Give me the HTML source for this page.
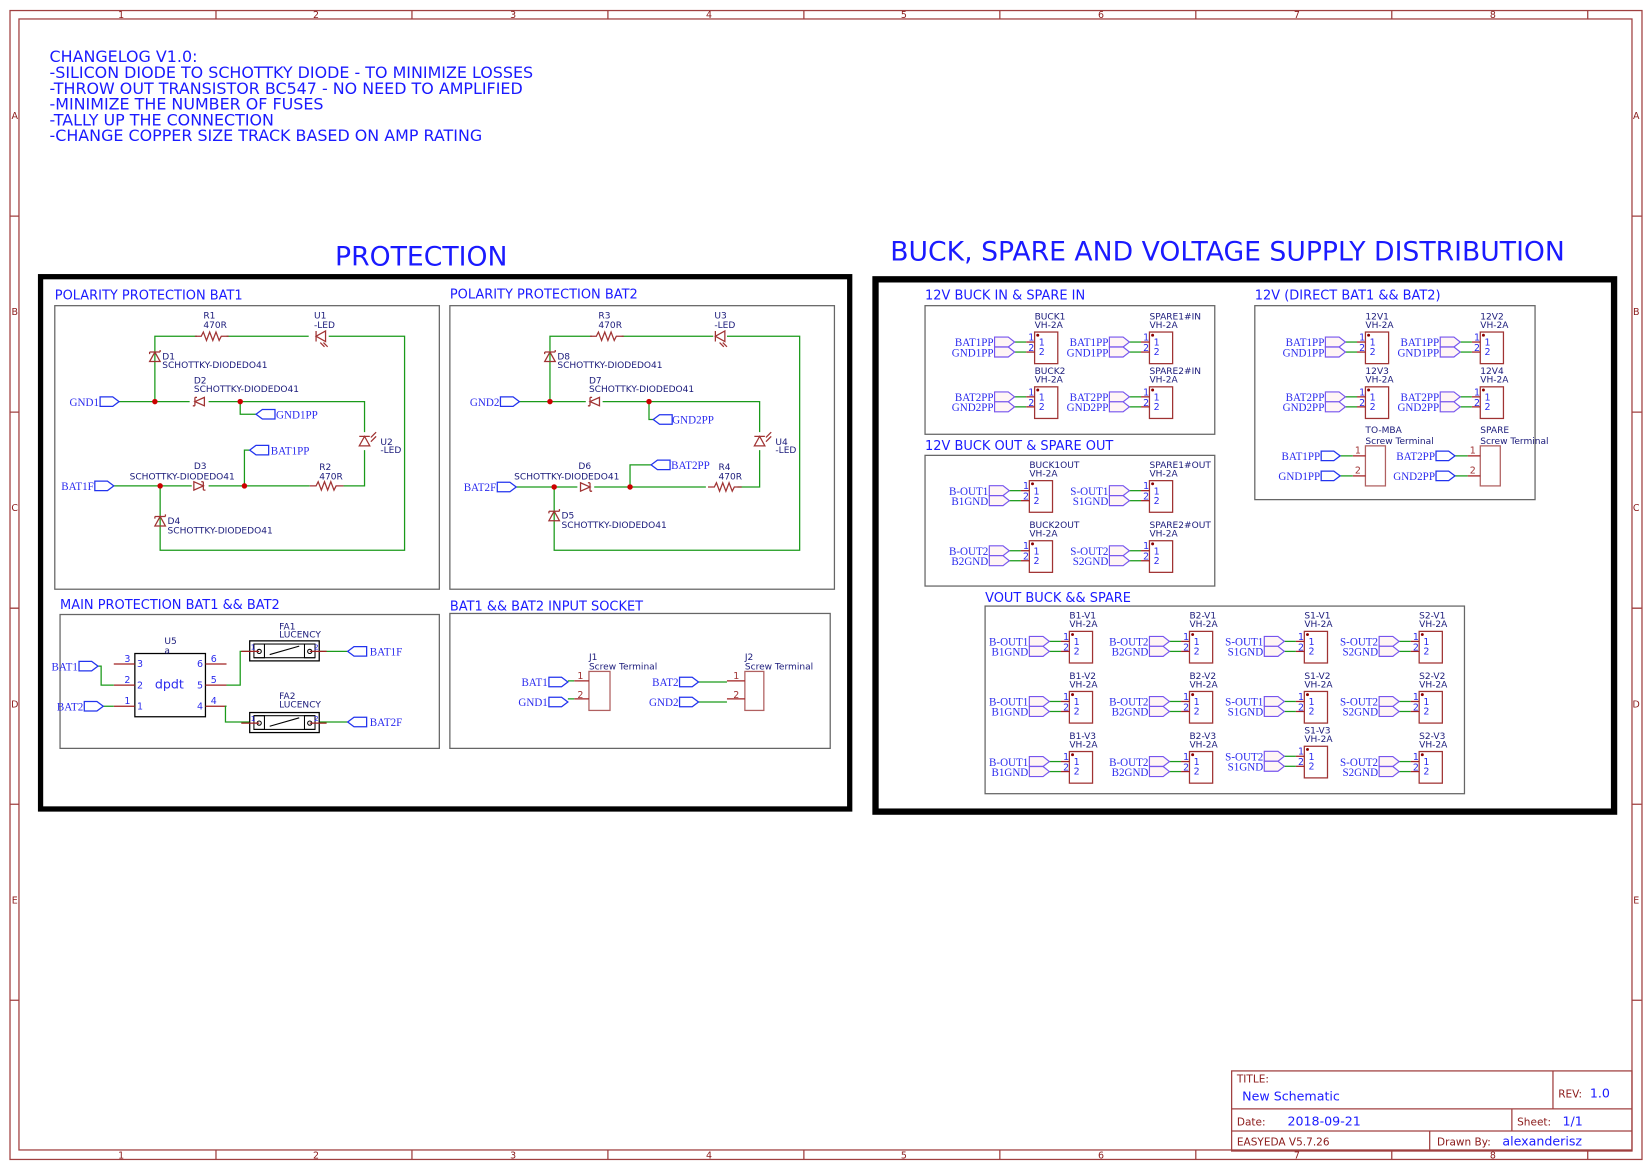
<!DOCTYPE html>
<html><head><meta charset="utf-8">
<style>
html,body{margin:0;padding:0;background:#fff;}
svg{display:block;}
text{font-family:"DejaVu Sans","Liberation Sans",sans-serif;}
.hd{fill:#1a1aff;font-size:12.3px;}
.cl{fill:#1a1aff;font-size:15.1px;}
.big{fill:#1a1aff;font-size:25.3px;}
.cp{fill:#1a1a7a;font-size:8.6px;}
.nl,.nl text{fill:#2a2aee;font-size:10.5px;font-family:"Liberation Serif",serif;}
.pn{fill:#2a2aee;font-size:9px;}
.pr{fill:#a03333;font-size:9px;}
.br{fill:#8b1a1a;font-size:9px;}
.tb{fill:#8b1a1a;font-size:10px;}
.tv{fill:#1a1aff;font-size:12px;}
.w{stroke:#1a9a1a;stroke-width:1.2;fill:none;}
.p{stroke:#a02020;stroke-width:1.2;fill:none;}
.sym{stroke:#a03333;stroke-width:1.2;fill:none;}
.box{stroke:#666;stroke-width:1.2;fill:none;}
.fl{stroke:#7755ee;stroke-width:1.1;fill:#fff5f5;}
.fb{stroke:#2233ee;stroke-width:1.2;fill:#fff;}
.dot{fill:#cc0000;}
</style></head><body>
<svg width="1652" height="1170" viewBox="0 0 1568 1110" preserveAspectRatio="none" xmlns="http://www.w3.org/2000/svg">
<defs>
<g id="cn">
<rect class="sym" x="0" y="0" width="22" height="30" stroke="#b06060"/>
<circle cx="3" cy="3" r="1.4" fill="#8b0000"/>
<line class="p" x1="-8" y1="9.5" x2="0" y2="9.5"/><line class="p" x1="-8" y1="19" x2="0" y2="19"/>
<line class="w" x1="-19" y1="9.5" x2="-8" y2="9.5"/><line class="w" x1="-19" y1="19" x2="-8" y2="19"/>
<polygon class="fl" points="-38,4.8 -25,4.8 -19,9.5 -25,14.2 -38,14.2"/>
<polygon class="fl" points="-38,14.2 -25,14.2 -19,19 -25,23.7 -38,23.7"/>
</g>
<g id="st">
<rect x="0" y="0" width="19" height="38" fill="none" stroke="#b06060" stroke-width="1.2"/>
<line class="p" x1="-12" y1="9.5" x2="0" y2="9.5"/><line class="p" x1="-12" y1="28.5" x2="0" y2="28.5"/>
<line class="w" x1="-24" y1="9.5" x2="-12" y2="9.5"/><line class="w" x1="-24" y1="28.5" x2="-12" y2="28.5"/>
<polygon class="fb" points="-42,5 -30,5 -24,9.5 -30,14 -42,14"/>
<polygon class="fb" points="-42,24 -30,24 -24,28.5 -30,33 -42,33"/>
</g>
<polygon id="flr" class="fb" points="0,-4.5 12,-4.5 18,0 12,4.5 0,4.5"/>
<polygon id="fll" class="fb" points="0,0 6,-4.5 18,-4.5 18,4.5 6,4.5"/>
<path id="res" class="sym" d="M-16,0 H-10 L-8,-4 L-5,4 L-2,-4 L1,4 L4,-4 L7,4 L9,0 H16"/>
<path id="dr" class="sym" d="M-5,-4 V4 L4,0 Z M4,-4 V4 M4,-4 h-2 M4,4 h2"/>
<path id="dl" class="sym" d="M5,-4 V4 L-4,0 Z M-4,-4 V4 M-4,-4 h2 M-4,4 h-2"/>
<path id="du" class="sym" d="M-5,5 H5 L0,-4 Z M-5,-4 H5 M-5,-4 v2 M5,-4 v-2"/>
<path id="led" class="sym" d="M5,-5 V5 L-4,0 Z M-4,-5 V5 M0,6 l4,4 M3,6 l4,4"/>
<path id="ledv" class="sym" d="M-5,5 H5 L0,-4 Z M-5,-4 H5 M6,-3 l5,-5 M6,1 l5,-5"/>
</defs>

<!-- frame -->
<rect x="9.5" y="10" width="1549" height="1090" fill="none" stroke="#a04040" stroke-width="1.2"/>
<rect x="18" y="18" width="1531" height="1073" fill="none" stroke="#a04040" stroke-width="1.2"/>
<g stroke="#a04040" stroke-width="1.2">
<path d="M205,10V18M391,10V18M577,10V18M763,10V18M949,10V18M1135,10V18M1321,10V18M1507,10V18"/>
<path d="M205,1091V1100M391,1091V1100M577,1091V1100M763,1091V1100M949,1091V1100M1135,1091V1100M1321,1091V1100M1507,1091V1100"/>
<path d="M9.5,205H18M9.5,391H18M9.5,577H18M9.5,763H18M9.5,949H18"/>
<path d="M1549,205H1558M1549,391H1558M1549,577H1558M1549,763H1558M1549,949H1558"/>
</g>
<g class="br" text-anchor="middle">
<text x="115" y="17">1</text><text x="300" y="17">2</text><text x="487" y="17">3</text><text x="673" y="17">4</text><text x="858" y="17">5</text><text x="1045" y="17">6</text><text x="1231" y="17">7</text><text x="1417" y="17">8</text>
<text x="115" y="1099">1</text><text x="300" y="1099">2</text><text x="487" y="1099">3</text><text x="673" y="1099">4</text><text x="858" y="1099">5</text><text x="1045" y="1099">6</text><text x="1231" y="1099">7</text><text x="1417" y="1099">8</text>
<text x="14" y="113">A</text><text x="14" y="299">B</text><text x="14" y="485">C</text><text x="14" y="671">D</text><text x="14" y="857">E</text>
<text x="1553" y="113">A</text><text x="1553" y="299">B</text><text x="1553" y="485">C</text><text x="1553" y="671">D</text><text x="1553" y="857">E</text>
</g>

<!-- changelog -->
<g class="cl">
<text x="47" y="59">CHANGELOG V1.0:</text>
<text x="47" y="74">-SILICON DIODE TO SCHOTTKY DIODE - TO MINIMIZE LOSSES</text>
<text x="47" y="89">-THROW OUT TRANSISTOR BC547 - NO NEED TO AMPLIFIED</text>
<text x="47" y="104">-MINIMIZE THE NUMBER OF FUSES</text>
<text x="47" y="119">-TALLY UP THE CONNECTION</text>
<text x="47" y="134">-CHANGE COPPER SIZE TRACK BASED ON AMP RATING</text>
</g>

<text class="big" x="318" y="252">PROTECTION</text>
<text class="big" x="845" y="247">BUCK, SPARE AND VOLTAGE SUPPLY DISTRIBUTION</text>

<rect x="38.5" y="262.5" width="768" height="505" fill="none" stroke="#000" stroke-width="5"/>
<rect x="831" y="265" width="701" height="505" fill="none" stroke="#000" stroke-width="6"/>

<!-- sub boxes -->
<rect class="box" x="52" y="290" width="365" height="269"/>
<rect class="box" x="427" y="290" width="365" height="269"/>
<rect class="box" x="57" y="583" width="360" height="127"/>
<rect class="box" x="427" y="582" width="361" height="128"/>
<rect class="box" x="878" y="290" width="275" height="122"/>
<rect class="box" x="878" y="432" width="275" height="124"/>
<rect class="box" x="1191" y="290" width="266" height="184"/>
<rect class="box" x="935" y="575" width="455" height="178"/>
<g class="hd">
<text x="52" y="284">POLARITY PROTECTION BAT1</text>
<text x="427" y="283">POLARITY PROTECTION BAT2</text>
<text x="57" y="578">MAIN PROTECTION BAT1 &amp;&amp; BAT2</text>
<text x="427" y="579">BAT1 &amp;&amp; BAT2 INPUT SOCKET</text>
<text x="878" y="284">12V BUCK IN &amp; SPARE IN</text>
<text x="878" y="427">12V BUCK OUT &amp; SPARE OUT</text>
<text x="1191" y="284">12V (DIRECT BAT1 &amp;&amp; BAT2)</text>
<text x="935" y="571">VOUT BUCK &amp;&amp; SPARE</text>
</g>

<!-- POLARITY BAT1 -->
<g>
<path class="w" d="M147,381V319H187 M215,319H293 M312,319H384V522H152V461 M113,381H180 M198,381H346V410 M346,427V461H326 M108,461H182 M198,461H294 M228,381V393H243 M232,461V427H237 M147,381V346 M147,330V319 M152,461V486 M152,503V522"/>
<use href="#res" x="201" y="319"/><use href="#led" x="304" y="319"/>
<use href="#du" x="147" y="338"/><use href="#dl" x="189" y="381"/><use href="#dr" x="189" y="461"/>
<use href="#du" x="152" y="494"/><use href="#ledv" x="346" y="418"/><use href="#res" x="310" y="461"/>
<circle class="dot" cx="147" cy="381" r="2.6"/><circle class="dot" cx="228" cy="381" r="2.6"/>
<circle class="dot" cx="152" cy="461" r="2.6"/><circle class="dot" cx="232" cy="461" r="2.6"/>
<use href="#flr" x="95" y="381"/><use href="#fll" x="243" y="393"/><use href="#fll" x="237" y="427"/><use href="#flr" x="90" y="461"/>
<g class="cp">
<text x="193" y="302">R1</text><text x="193" y="311">470R</text>
<text x="298" y="302">U1</text><text x="298" y="311">-LED</text>
<text x="154" y="341">D1</text><text x="154" y="349">SCHOTTKY-DIODEDO41</text>
<text x="184" y="364">D2</text><text x="184" y="372">SCHOTTKY-DIODEDO41</text>
<text x="361" y="422">U2</text><text x="361" y="430">-LED</text>
<text x="184" y="445">D3</text><text x="123" y="455">SCHOTTKY-DIODEDO41</text>
<text x="303" y="446">R2</text><text x="303" y="455">470R</text>
<text x="159" y="497">D4</text><text x="159" y="506">SCHOTTKY-DIODEDO41</text>
</g>
<g class="nl"><text x="94" y="385" text-anchor="end">GND1</text><text x="262" y="397">GND1PP</text><text x="257" y="431">BAT1PP</text><text x="89" y="465" text-anchor="end">BAT1F</text></g>
</g>

<!-- POLARITY BAT2 -->
<g>
<path class="w" d="M522,381V319H562 M590,319H677 M690,319H759V522H526V462 M493,381H556 M572,381H721V410 M721,427V462H700 M490,462H548 M564,462H670 M616,381V398H620 M598,462V441H618 M522,381V346 M522,330V319 M526,462V481 M526,498V522"/>
<use href="#res" x="576" y="319"/><use href="#led" x="683" y="319"/>
<use href="#du" x="522" y="338"/><use href="#dl" x="564" y="381"/><use href="#dr" x="556" y="462"/>
<use href="#du" x="526" y="489"/><use href="#ledv" x="721" y="418"/><use href="#res" x="688" y="462"/>
<circle class="dot" cx="522" cy="381" r="2.6"/><circle class="dot" cx="616" cy="381" r="2.6"/>
<circle class="dot" cx="526" cy="462" r="2.6"/><circle class="dot" cx="598" cy="462" r="2.6"/>
<use href="#flr" x="475" y="381"/><use href="#fll" x="620" y="398"/><use href="#fll" x="618" y="441"/><use href="#flr" x="472" y="462"/>
<g class="cp">
<text x="568" y="302">R3</text><text x="568" y="311">470R</text>
<text x="678" y="302">U3</text><text x="678" y="311">-LED</text>
<text x="529" y="341">D8</text><text x="529" y="349">SCHOTTKY-DIODEDO41</text>
<text x="559" y="364">D7</text><text x="559" y="372">SCHOTTKY-DIODEDO41</text>
<text x="736" y="422">U4</text><text x="736" y="430">-LED</text>
<text x="549" y="445">D6</text><text x="488" y="455">SCHOTTKY-DIODEDO41</text>
<text x="682" y="446">R4</text><text x="682" y="455">470R</text>
<text x="533" y="492">D5</text><text x="533" y="501">SCHOTTKY-DIODEDO41</text>
</g>
<g class="nl"><text x="474" y="385" text-anchor="end">GND2</text><text x="638" y="402">GND2PP</text><text x="637" y="445">BAT2PP</text><text x="471" y="466" text-anchor="end">BAT2F</text></g>
</g>

<!-- MAIN PROTECTION -->
<g>
<rect x="128" y="620" width="67" height="60" fill="none" stroke="#000" stroke-width="1.2"/>
<path class="p" d="M108,630H128M108,650H128M108,670H128M195,630H215M195,650H215M195,670H215"/>
<path class="w" d="M93,632H96V650H108 M98,670H108 M215,650H228V618H237 M215,670H214V685H237 M303,618H330 M303,685H330"/>
<rect x="237" y="608" width="66" height="19" fill="none" stroke="#000" stroke-width="1.2"/>
<rect x="241" y="611" width="58" height="13" fill="none" stroke="#000" stroke-width="1"/>
<path d="M241,611h10v13h-10M299,611h-10v13h10M256,621l28,-8" stroke="#000" fill="none"/>
<circle cx="246" cy="618" r="2" fill="none" stroke="#000"/><circle cx="294" cy="618" r="2" fill="none" stroke="#000"/>
<rect x="237" y="676" width="66" height="19" fill="none" stroke="#000" stroke-width="1.2"/>
<rect x="241" y="679" width="58" height="13" fill="none" stroke="#000" stroke-width="1"/>
<path d="M241,679h10v13h-10M299,679h-10v13h10M256,689l28,-8" stroke="#000" fill="none"/>
<circle cx="246" cy="686" r="2" fill="none" stroke="#000"/><circle cx="294" cy="686" r="2" fill="none" stroke="#000"/>
<path class="p" d="M229,618H246M294,618H310M229,686H246M294,686H310"/>
<use href="#flr" x="75" y="632"/><use href="#flr" x="80" y="670"/>
<use href="#fll" x="330" y="618"/><use href="#fll" x="330" y="685"/>
<g class="cp"><text x="156" y="611">U5</text><text x="156" y="620">a</text>
<text x="265" y="597">FA1</text><text x="265" y="605">LUCENCY</text>
<text x="265" y="663">FA2</text><text x="265" y="671">LUCENCY</text></g>
<text x="147" y="653" fill="#2a2aee" font-size="12">dpdt</text>
<g class="pn"><text x="118" y="628">3</text><text x="130" y="633">3</text><text x="118" y="648">2</text><text x="130" y="653">2</text><text x="118" y="668">1</text><text x="130" y="673">1</text>
<text x="187" y="633">6</text><text x="200" y="628">6</text><text x="187" y="653">5</text><text x="200" y="648">5</text><text x="187" y="673">4</text><text x="200" y="668">4</text>
<text x="238" y="616" font-size="7">1</text><text x="298" y="616" font-size="7">2</text><text x="238" y="684" font-size="7">1</text><text x="298" y="684" font-size="7">2</text></g>
<g class="nl"><text x="74" y="636" text-anchor="end">BAT1</text><text x="79" y="674" text-anchor="end">BAT2</text><text x="351" y="622">BAT1F</text><text x="351" y="689">BAT2F</text></g>
</g>

<!-- INPUT SOCKET -->
<g>
<g transform="translate(559,637)"><rect width="20" height="37" fill="none" stroke="#b06060" stroke-width="1.2"/><path class="p" d="M-14,9H0M-14,26H0"/><path class="w" d="M-20,9H-14M-20,26H-14"/><use href="#flr" x="-38" y="10"/><use href="#flr" x="-38" y="29"/></g>
<g transform="translate(707,637)"><rect width="18" height="37" fill="none" stroke="#b06060" stroke-width="1.2"/><path class="p" d="M-17,9H0M-17,26H0"/><path class="w" d="M-44,10H-17M-44,29H-17"/><use href="#flr" x="-62" y="10"/><use href="#flr" x="-62" y="29"/></g>
<g class="cp"><text x="559" y="626">J1</text><text x="559" y="635">Screw Terminal</text><text x="707" y="626">J2</text><text x="707" y="635">Screw Terminal</text></g>
<g class="pr"><text x="548" y="644">1</text><text x="548" y="662">2</text><text x="696" y="644">1</text><text x="696" y="662">2</text></g>
<g class="nl"><text x="520" y="651" text-anchor="end">BAT1</text><text x="520" y="670" text-anchor="end">GND1</text><text x="644" y="651" text-anchor="end">BAT2</text><text x="644" y="670" text-anchor="end">GND2</text></g>
</g>

<!-- connectors -->
<g transform="translate(982,315)"><use href="#cn"/><text class="cp" x="0" y="-12">BUCK1</text><text class="cp" x="0" y="-4">VH-2A</text><text class="nl" x="-39" y="13.5" text-anchor="end">BAT1PP</text><text class="nl" x="-39" y="23" text-anchor="end">GND1PP</text><text class="pn" x="-6" y="8">1</text><text class="pn" x="-6" y="18">2</text><text class="pn" x="4" y="13">1</text><text class="pn" x="4" y="22">2</text></g>
<g transform="translate(1091,315)"><use href="#cn"/><text class="cp" x="0" y="-12">SPARE1#IN</text><text class="cp" x="0" y="-4">VH-2A</text><text class="nl" x="-39" y="13.5" text-anchor="end">BAT1PP</text><text class="nl" x="-39" y="23" text-anchor="end">GND1PP</text><text class="pn" x="-6" y="8">1</text><text class="pn" x="-6" y="18">2</text><text class="pn" x="4" y="13">1</text><text class="pn" x="4" y="22">2</text></g>
<g transform="translate(982,367)"><use href="#cn"/><text class="cp" x="0" y="-12">BUCK2</text><text class="cp" x="0" y="-4">VH-2A</text><text class="nl" x="-39" y="13.5" text-anchor="end">BAT2PP</text><text class="nl" x="-39" y="23" text-anchor="end">GND2PP</text><text class="pn" x="-6" y="8">1</text><text class="pn" x="-6" y="18">2</text><text class="pn" x="4" y="13">1</text><text class="pn" x="4" y="22">2</text></g>
<g transform="translate(1091,367)"><use href="#cn"/><text class="cp" x="0" y="-12">SPARE2#IN</text><text class="cp" x="0" y="-4">VH-2A</text><text class="nl" x="-39" y="13.5" text-anchor="end">BAT2PP</text><text class="nl" x="-39" y="23" text-anchor="end">GND2PP</text><text class="pn" x="-6" y="8">1</text><text class="pn" x="-6" y="18">2</text><text class="pn" x="4" y="13">1</text><text class="pn" x="4" y="22">2</text></g>

<g transform="translate(977,456)"><use href="#cn"/><text class="cp" x="0" y="-12">BUCK1OUT</text><text class="cp" x="0" y="-4">VH-2A</text><text class="nl" x="-39" y="13.5" text-anchor="end">B-OUT1</text><text class="nl" x="-39" y="23" text-anchor="end">B1GND</text><text class="pn" x="-6" y="8">1</text><text class="pn" x="-6" y="18">2</text><text class="pn" x="4" y="13">1</text><text class="pn" x="4" y="22">2</text></g>
<g transform="translate(1091,456)"><use href="#cn"/><text class="cp" x="0" y="-12">SPARE1#OUT</text><text class="cp" x="0" y="-4">VH-2A</text><text class="nl" x="-39" y="13.5" text-anchor="end">S-OUT1</text><text class="nl" x="-39" y="23" text-anchor="end">S1GND</text><text class="pn" x="-6" y="8">1</text><text class="pn" x="-6" y="18">2</text><text class="pn" x="4" y="13">1</text><text class="pn" x="4" y="22">2</text></g>
<g transform="translate(977,513)"><use href="#cn"/><text class="cp" x="0" y="-12">BUCK2OUT</text><text class="cp" x="0" y="-4">VH-2A</text><text class="nl" x="-39" y="13.5" text-anchor="end">B-OUT2</text><text class="nl" x="-39" y="23" text-anchor="end">B2GND</text><text class="pn" x="-6" y="8">1</text><text class="pn" x="-6" y="18">2</text><text class="pn" x="4" y="13">1</text><text class="pn" x="4" y="22">2</text></g>
<g transform="translate(1091,513)"><use href="#cn"/><text class="cp" x="0" y="-12">SPARE2#OUT</text><text class="cp" x="0" y="-4">VH-2A</text><text class="nl" x="-39" y="13.5" text-anchor="end">S-OUT2</text><text class="nl" x="-39" y="23" text-anchor="end">S2GND</text><text class="pn" x="-6" y="8">1</text><text class="pn" x="-6" y="18">2</text><text class="pn" x="4" y="13">1</text><text class="pn" x="4" y="22">2</text></g>

<g transform="translate(1296,315)"><use href="#cn"/><text class="cp" x="0" y="-12">12V1</text><text class="cp" x="0" y="-4">VH-2A</text><text class="nl" x="-39" y="13.5" text-anchor="end">BAT1PP</text><text class="nl" x="-39" y="23" text-anchor="end">GND1PP</text><text class="pn" x="-6" y="8">1</text><text class="pn" x="-6" y="18">2</text><text class="pn" x="4" y="13">1</text><text class="pn" x="4" y="22">2</text></g>
<g transform="translate(1405,315)"><use href="#cn"/><text class="cp" x="0" y="-12">12V2</text><text class="cp" x="0" y="-4">VH-2A</text><text class="nl" x="-39" y="13.5" text-anchor="end">BAT1PP</text><text class="nl" x="-39" y="23" text-anchor="end">GND1PP</text><text class="pn" x="-6" y="8">1</text><text class="pn" x="-6" y="18">2</text><text class="pn" x="4" y="13">1</text><text class="pn" x="4" y="22">2</text></g>
<g transform="translate(1296,367)"><use href="#cn"/><text class="cp" x="0" y="-12">12V3</text><text class="cp" x="0" y="-4">VH-2A</text><text class="nl" x="-39" y="13.5" text-anchor="end">BAT2PP</text><text class="nl" x="-39" y="23" text-anchor="end">GND2PP</text><text class="pn" x="-6" y="8">1</text><text class="pn" x="-6" y="18">2</text><text class="pn" x="4" y="13">1</text><text class="pn" x="4" y="22">2</text></g>
<g transform="translate(1405,367)"><use href="#cn"/><text class="cp" x="0" y="-12">12V4</text><text class="cp" x="0" y="-4">VH-2A</text><text class="nl" x="-39" y="13.5" text-anchor="end">BAT2PP</text><text class="nl" x="-39" y="23" text-anchor="end">GND2PP</text><text class="pn" x="-6" y="8">1</text><text class="pn" x="-6" y="18">2</text><text class="pn" x="4" y="13">1</text><text class="pn" x="4" y="22">2</text></g>

<g transform="translate(1296,423)"><use href="#st"/><text class="cp" x="0" y="-12">TO-MBA</text><text class="cp" x="0" y="-2">Screw Terminal</text><text class="pr" x="-10" y="7">1</text><text class="pr" x="-10" y="26">2</text><text class="nl" x="-43" y="13.5" text-anchor="end">BAT1PP</text><text class="nl" x="-43" y="32.5" text-anchor="end">GND1PP</text></g>
<g transform="translate(1405,423)"><use href="#st"/><text class="cp" x="0" y="-12">SPARE</text><text class="cp" x="0" y="-2">Screw Terminal</text><text class="pr" x="-10" y="7">1</text><text class="pr" x="-10" y="26">2</text><text class="nl" x="-43" y="13.5" text-anchor="end">BAT2PP</text><text class="nl" x="-43" y="32.5" text-anchor="end">GND2PP</text></g>

<!-- VOUT grid -->
<g transform="translate(1015,599)"><use href="#cn"/><text class="cp" x="0" y="-12">B1-V1</text><text class="cp" x="0" y="-4">VH-2A</text><text class="nl" x="-39" y="13.5" text-anchor="end">B-OUT1</text><text class="nl" x="-39" y="23" text-anchor="end">B1GND</text><text class="pn" x="-6" y="8">1</text><text class="pn" x="-6" y="18">2</text><text class="pn" x="4" y="13">1</text><text class="pn" x="4" y="22">2</text></g>
<g transform="translate(1129,599)"><use href="#cn"/><text class="cp" x="0" y="-12">B2-V1</text><text class="cp" x="0" y="-4">VH-2A</text><text class="nl" x="-39" y="13.5" text-anchor="end">B-OUT2</text><text class="nl" x="-39" y="23" text-anchor="end">B2GND</text><text class="pn" x="-6" y="8">1</text><text class="pn" x="-6" y="18">2</text><text class="pn" x="4" y="13">1</text><text class="pn" x="4" y="22">2</text></g>
<g transform="translate(1238,599)"><use href="#cn"/><text class="cp" x="0" y="-12">S1-V1</text><text class="cp" x="0" y="-4">VH-2A</text><text class="nl" x="-39" y="13.5" text-anchor="end">S-OUT1</text><text class="nl" x="-39" y="23" text-anchor="end">S1GND</text><text class="pn" x="-6" y="8">1</text><text class="pn" x="-6" y="18">2</text><text class="pn" x="4" y="13">1</text><text class="pn" x="4" y="22">2</text></g>
<g transform="translate(1347,599)"><use href="#cn"/><text class="cp" x="0" y="-12">S2-V1</text><text class="cp" x="0" y="-4">VH-2A</text><text class="nl" x="-39" y="13.5" text-anchor="end">S-OUT2</text><text class="nl" x="-39" y="23" text-anchor="end">S2GND</text><text class="pn" x="-6" y="8">1</text><text class="pn" x="-6" y="18">2</text><text class="pn" x="4" y="13">1</text><text class="pn" x="4" y="22">2</text></g>

<g transform="translate(1015,656)"><use href="#cn"/><text class="cp" x="0" y="-12">B1-V2</text><text class="cp" x="0" y="-4">VH-2A</text><text class="nl" x="-39" y="13.5" text-anchor="end">B-OUT1</text><text class="nl" x="-39" y="23" text-anchor="end">B1GND</text><text class="pn" x="-6" y="8">1</text><text class="pn" x="-6" y="18">2</text><text class="pn" x="4" y="13">1</text><text class="pn" x="4" y="22">2</text></g>
<g transform="translate(1129,656)"><use href="#cn"/><text class="cp" x="0" y="-12">B2-V2</text><text class="cp" x="0" y="-4">VH-2A</text><text class="nl" x="-39" y="13.5" text-anchor="end">B-OUT2</text><text class="nl" x="-39" y="23" text-anchor="end">B2GND</text><text class="pn" x="-6" y="8">1</text><text class="pn" x="-6" y="18">2</text><text class="pn" x="4" y="13">1</text><text class="pn" x="4" y="22">2</text></g>
<g transform="translate(1238,656)"><use href="#cn"/><text class="cp" x="0" y="-12">S1-V2</text><text class="cp" x="0" y="-4">VH-2A</text><text class="nl" x="-39" y="13.5" text-anchor="end">S-OUT1</text><text class="nl" x="-39" y="23" text-anchor="end">S1GND</text><text class="pn" x="-6" y="8">1</text><text class="pn" x="-6" y="18">2</text><text class="pn" x="4" y="13">1</text><text class="pn" x="4" y="22">2</text></g>
<g transform="translate(1347,656)"><use href="#cn"/><text class="cp" x="0" y="-12">S2-V2</text><text class="cp" x="0" y="-4">VH-2A</text><text class="nl" x="-39" y="13.5" text-anchor="end">S-OUT2</text><text class="nl" x="-39" y="23" text-anchor="end">S2GND</text><text class="pn" x="-6" y="8">1</text><text class="pn" x="-6" y="18">2</text><text class="pn" x="4" y="13">1</text><text class="pn" x="4" y="22">2</text></g>

<g transform="translate(1015,713)"><use href="#cn"/><text class="cp" x="0" y="-12">B1-V3</text><text class="cp" x="0" y="-4">VH-2A</text><text class="nl" x="-39" y="13.5" text-anchor="end">B-OUT1</text><text class="nl" x="-39" y="23" text-anchor="end">B1GND</text><text class="pn" x="-6" y="8">1</text><text class="pn" x="-6" y="18">2</text><text class="pn" x="4" y="13">1</text><text class="pn" x="4" y="22">2</text></g>
<g transform="translate(1129,713)"><use href="#cn"/><text class="cp" x="0" y="-12">B2-V3</text><text class="cp" x="0" y="-4">VH-2A</text><text class="nl" x="-39" y="13.5" text-anchor="end">B-OUT2</text><text class="nl" x="-39" y="23" text-anchor="end">B2GND</text><text class="pn" x="-6" y="8">1</text><text class="pn" x="-6" y="18">2</text><text class="pn" x="4" y="13">1</text><text class="pn" x="4" y="22">2</text></g>
<g transform="translate(1238,708)"><use href="#cn"/><text class="cp" x="0" y="-12">S1-V3</text><text class="cp" x="0" y="-4">VH-2A</text><text class="nl" x="-39" y="13.5" text-anchor="end">S-OUT2</text><text class="nl" x="-39" y="23" text-anchor="end">S1GND</text><text class="pn" x="-6" y="8">1</text><text class="pn" x="-6" y="18">2</text><text class="pn" x="4" y="13">1</text><text class="pn" x="4" y="22">2</text></g>
<g transform="translate(1347,713)"><use href="#cn"/><text class="cp" x="0" y="-12">S2-V3</text><text class="cp" x="0" y="-4">VH-2A</text><text class="nl" x="-39" y="13.5" text-anchor="end">S-OUT2</text><text class="nl" x="-39" y="23" text-anchor="end">S2GND</text><text class="pn" x="-6" y="8">1</text><text class="pn" x="-6" y="18">2</text><text class="pn" x="4" y="13">1</text><text class="pn" x="4" y="22">2</text></g>

<!-- title block -->
<g stroke="#a04040" stroke-width="1.2" fill="none">
<rect x="1169" y="1016" width="380" height="76"/>
<path d="M1169,1052H1549M1169,1073H1549M1474,1016V1052M1435,1052V1073M1357,1073V1092"/>
</g>
<text class="tb" x="1174" y="1027">TITLE:</text>
<text class="tv" x="1179" y="1044" font-size="13">New Schematic</text>
<text class="tb" x="1479" y="1041">REV:</text><text class="tv" x="1509" y="1041">1.0</text>
<text class="tb" x="1174" y="1068">Date:</text><text class="tv" x="1222" y="1068">2018-09-21</text>
<text class="tb" x="1440" y="1068">Sheet:</text><text class="tv" x="1483" y="1068">1/1</text>
<text class="tb" x="1174" y="1087">EASYEDA V5.7.26</text>
<text class="tb" x="1364" y="1087">Drawn By:</text><text class="tv" x="1426" y="1087">alexanderisz</text>
</svg>
</body></html>
